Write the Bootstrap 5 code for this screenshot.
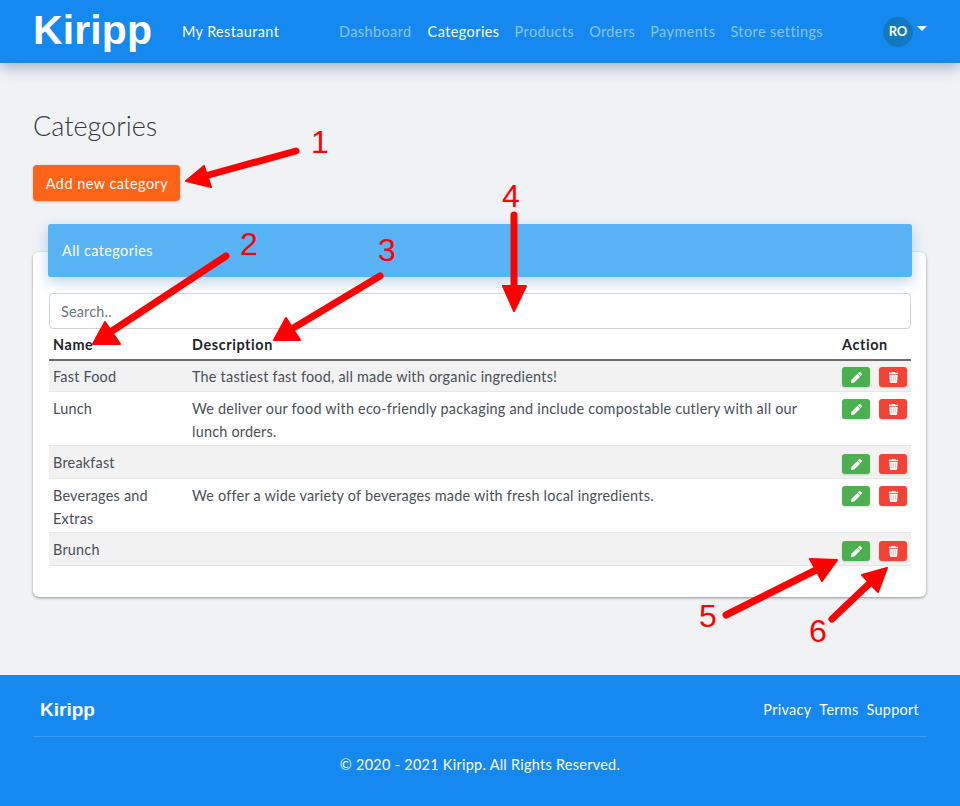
<!doctype html>
<html lang="en"><head><meta charset="utf-8"><title>Categories</title>
<link href="https://cdn.jsdelivr.net/npm/bootstrap@5.3.0/dist/css/bootstrap.min.css" rel="stylesheet">
<style>
body{font-family:"Lato","Open Sans",sans-serif;font-size:14.4px;line-height:1.6;background:#f0f2f6;color:#343a40;position:relative;min-height:806px;overflow:hidden}
.kp-nav{background:#1589f0;height:63px;padding:0 33px;box-shadow:0 4px 14px rgba(40,70,110,.4)}
.kp-logo{font:700 41px/1 "Liberation Sans",sans-serif;color:#fff;width:149px;text-decoration:none;margin-top:-2px;letter-spacing:.1px}
.kp-store{color:#fff;width:157px;letter-spacing:.4px}
.kp-links{gap:15px;letter-spacing:.45px}
.kp-links a{color:rgba(255,255,255,.5);text-decoration:none}
.kp-links a:first-child{margin-right:1px}
.kp-links a.on{color:#fff}
.kp-avatar{width:30px;height:30px;border-radius:50%;background:#1279c0;color:#fff;font-weight:700;font-size:13px}
.kp-caret{border-top:5px solid #fff;border-left:5px solid transparent;border-right:5px solid transparent;margin:-7px 0 0 4px}
.kp-main{padding:46px 33px 0;height:612px}
.kp-title{font-size:27px;font-weight:300;line-height:34px;margin-bottom:22px;color:#343a40}
.kp-add{background:#ff6418;color:#fff;border:0;width:147px;height:36px;border-radius:4px;font-size:14.4px;box-shadow:0 1px 3px rgba(0,0,0,.2);padding:1px 0 0 1px;letter-spacing:.5px}
.kp-card{display:flow-root;margin-top:51px;background:#fff;border-radius:6px;box-shadow:0 1px 3px rgba(0,0,0,.4);height:345px;width:893px;padding:0 15px 0 16px}
.kp-head{background:#58b3f5;color:#fff;height:53px;margin:-28px -1px 16px -1px;padding:0 14px;border-radius:3px;display:flex;align-items:center;box-shadow:0 5px 14px rgba(60,130,200,.35);font-size:14.4px;letter-spacing:.43px}
.kp-search{height:36px;font-size:14.4px;padding:0 11px;border-radius:4px;border-color:#ced4da;letter-spacing:.2px}
.kp-search::placeholder{color:#6c757d}
.kp-table{table-layout:fixed;width:100%;margin:0;font-size:14.4px;color:#495057;letter-spacing:.23px}
.kp-table th{color:#212529;font-weight:700;padding:4px 4px 3px;border-bottom:2px solid #6b6b6b;line-height:23px;letter-spacing:.6px}
.kp-table td{padding:5px 4px 2px;line-height:23px;border-bottom:1px solid #e4e6e8;vertical-align:top}
.kp-table td:nth-child(2){padding-right:30px}
.kp-table tbody tr:nth-child(odd) td{background:#f2f2f2;padding-bottom:4px}
.kp-table tbody tr:first-child td{padding:4px 4px 3px}
.kp-act{display:flex;gap:9px;padding-top:2px}
.kp-table tbody tr:nth-child(n+3):nth-child(odd) .kp-act{padding-top:3px}
.kp-btn{width:28px;height:20px;border:0;border-radius:3px;padding:0;display:flex;align-items:center;justify-content:center;box-shadow:0 1px 2px rgba(0,0,0,.15)}
.kp-edit{background:#4caf50}
.kp-del{background:#f44336}
.kp-btn svg{height:11px;width:11px;fill:#fff}
.kp-foot{background:#1589f0;color:#fff;height:131px;padding:0 33px;letter-spacing:.3px}
.kp-foot-top{height:62px;padding:8px 8px 0 7px;border-bottom:1px solid #3c9cf3}
.kp-foot-logo{font:700 19px "Liberation Sans",sans-serif;letter-spacing:0}
.kp-foot-links{gap:8px}
.kp-foot-links a{color:#fff;text-decoration:none}
.kp-copy{text-align:center;padding-top:16px}
.kp-anno{position:absolute;left:0;top:0;width:960px;height:806px;pointer-events:none}
.kp-anno text{font:32px "Liberation Sans",sans-serif;fill:#f00;text-anchor:middle}
.kp-anno line{stroke:#f00;stroke-width:7;stroke-linecap:round}
.kp-anno polygon{fill:#f00;stroke:#f00;stroke-width:2;stroke-linejoin:round}
</style></head>
<body>
<nav class="kp-nav d-flex align-items-center">
  <a class="kp-logo" href="#">Kiripp</a>
  <span class="kp-store">My Restaurant</span>
  <div class="kp-links d-flex">
    <a href="#">Dashboard</a><a class="on" href="#">Categories</a><a href="#">Products</a><a href="#">Orders</a><a href="#">Payments</a><a href="#">Store settings</a>
  </div>
  <div class="ms-auto d-flex align-items-center">
    <span class="kp-avatar d-flex align-items-center justify-content-center">RO</span><span class="kp-caret"></span>
  </div>
</nav>
<main class="kp-main">
  <h1 class="kp-title">Categories</h1>
  <button class="btn kp-add">Add new category</button>
  <section class="kp-card">
    <div class="kp-head">All categories</div>
    <input class="form-control kp-search" placeholder="Search..">
    <table class="table kp-table">
      <colgroup><col style="width:139px"><col style="width:650px"><col></colgroup>
      <thead><tr><th>Name</th><th>Description</th><th>Action</th></tr></thead>
      <tbody>
        <tr><td>Fast Food</td><td>The tastiest fast food, all made with organic ingredients!</td><td><div class="kp-act"><button class="kp-btn kp-edit"><svg viewBox="0 0 512 512"><use href="#pen"/></svg></button><button class="kp-btn kp-del"><svg viewBox="0 0 448 512"><use href="#bin"/></svg></button></div></td></tr>
        <tr><td>Lunch</td><td>We deliver our food with eco-friendly packaging and include compostable cutlery with all our lunch orders.</td><td><div class="kp-act"><button class="kp-btn kp-edit"><svg viewBox="0 0 512 512"><use href="#pen"/></svg></button><button class="kp-btn kp-del"><svg viewBox="0 0 448 512"><use href="#bin"/></svg></button></div></td></tr>
        <tr><td>Breakfast</td><td></td><td><div class="kp-act"><button class="kp-btn kp-edit"><svg viewBox="0 0 512 512"><use href="#pen"/></svg></button><button class="kp-btn kp-del"><svg viewBox="0 0 448 512"><use href="#bin"/></svg></button></div></td></tr>
        <tr><td>Beverages and Extras</td><td>We offer a wide variety of beverages made with fresh local ingredients.</td><td><div class="kp-act"><button class="kp-btn kp-edit"><svg viewBox="0 0 512 512"><use href="#pen"/></svg></button><button class="kp-btn kp-del"><svg viewBox="0 0 448 512"><use href="#bin"/></svg></button></div></td></tr>
        <tr><td>Brunch</td><td></td><td><div class="kp-act"><button class="kp-btn kp-edit"><svg viewBox="0 0 512 512"><use href="#pen"/></svg></button><button class="kp-btn kp-del"><svg viewBox="0 0 448 512"><use href="#bin"/></svg></button></div></td></tr>
      </tbody>
    </table>
  </section>
</main>
<footer class="kp-foot">
  <div class="kp-foot-top d-flex align-items-center justify-content-between">
    <span class="kp-foot-logo">Kiripp</span>
    <div class="kp-foot-links d-flex"><a href="#">Privacy</a><a href="#">Terms</a><a href="#">Support</a></div>
  </div>
  <div class="kp-copy">© 2020 - 2021 Kiripp. All Rights Reserved.</div>
</footer>
<svg class="kp-anno" viewBox="0 0 960 806">
  <defs>
    <symbol id="pen" viewBox="0 0 512 512"><path d="M497.9 142.1l-46.1 46.1c-4.7 4.7-12.3 4.7-17 0l-111-111c-4.7-4.7-4.7-12.3 0-17l46.1-46.1c18.7-18.7 49.1-18.7 67.9 0l60.1 60.1c18.8 18.7 18.8 49.1 0 67.9zM284.2 99.8L21.6 362.4.4 483.9c-2.9 16.4 11.4 30.6 27.8 27.8l121.5-21.3 262.6-262.6c4.7-4.7 4.7-12.3 0-17l-111-111c-4.8-4.7-12.4-4.7-17.1 0z"/></symbol>
    <symbol id="bin" viewBox="0 0 448 512"><path d="M432 32H312l-9.4-18.7A24 24 0 0 0 281.1 0H166.8a23.72 23.72 0 0 0-21.4 13.3L136 32H16A16 16 0 0 0 0 48v32a16 16 0 0 0 16 16h416a16 16 0 0 0 16-16V48a16 16 0 0 0-16-16zM53.2 467a48 48 0 0 0 47.9 45h245.8a48 48 0 0 0 47.9-45L416 128H32z"/><path fill="#f8a09a" d="M128 192h32v240h-32zM208 192h32v240h-32zM288 192h32v240h-32z"/></symbol>
  </defs>
  <line x1="296" y1="151" x2="205" y2="176"/><polygon points="186,181 204,166 211,187"/>
  <line x1="226" y1="256" x2="112" y2="331"/><polygon points="93,344 105,322 120,344"/>
  <line x1="380" y1="276" x2="295" y2="327"/><polygon points="274,340 286,318 300,340"/>
  <line x1="514" y1="215" x2="514" y2="290"/><polygon points="514,311 503,286 526,286"/>
  <line x1="726" y1="615" x2="816" y2="570"/><polygon points="837,560 810,559 822,581"/>
  <line x1="832" y1="619" x2="872" y2="581"/><polygon points="887,568 862,575 878,592"/>
  <text x="320" y="153">1</text><text x="249" y="255">2</text><text x="387" y="261">3</text><text x="511" y="207">4</text><text x="708" y="627">5</text><text x="818" y="642">6</text>
</svg>
</body></html>
